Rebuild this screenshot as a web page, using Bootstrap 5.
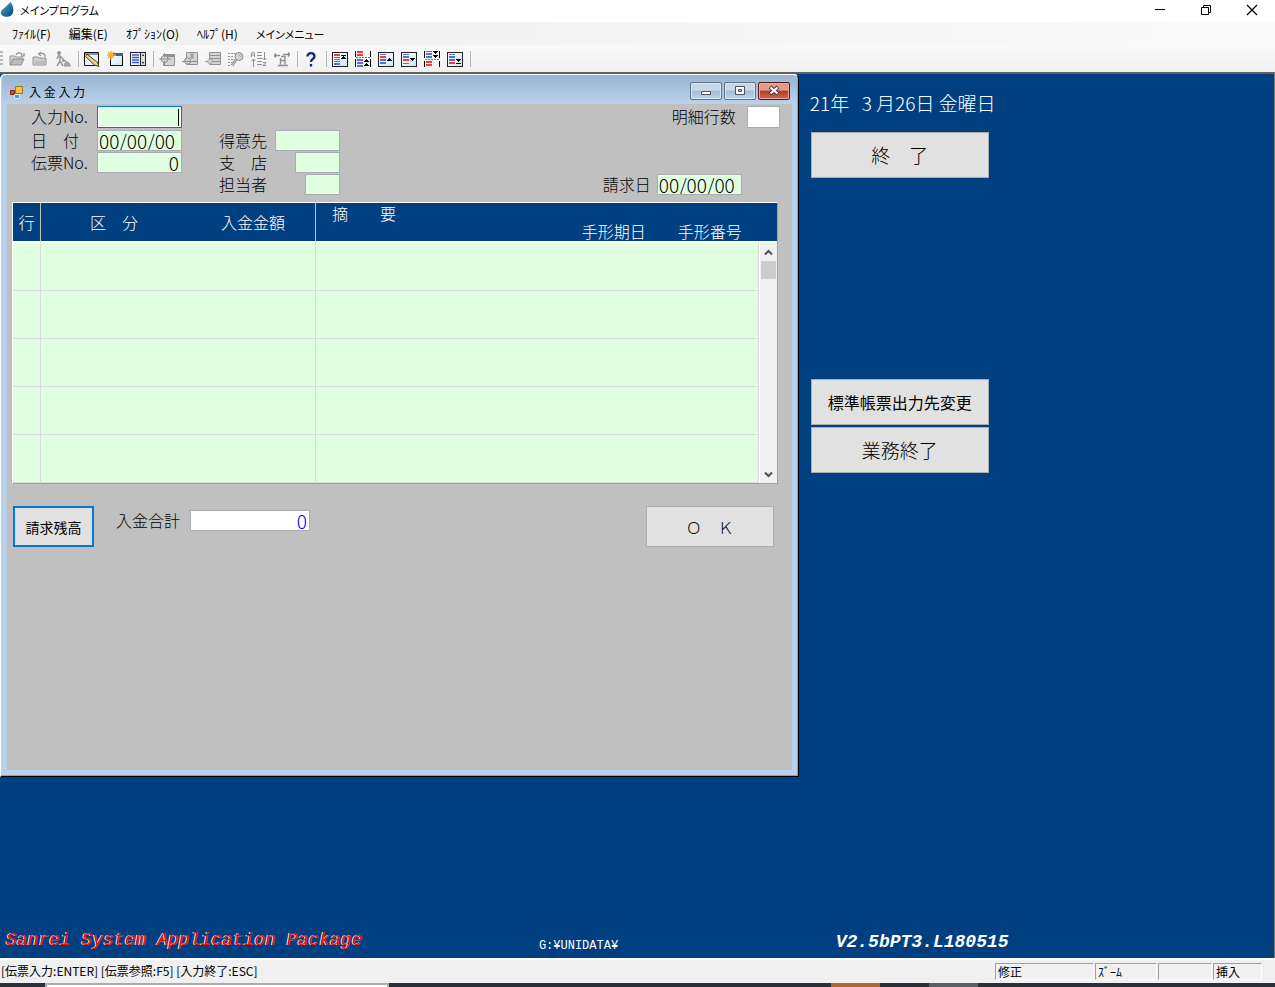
<!DOCTYPE html>
<html lang="ja">
<head>
<meta charset="utf-8">
<meta name="viewport" content="width=device-width, initial-scale=1">
<title>メインプログラム</title>
<link href="https://cdn.jsdelivr.net/npm/bootstrap@5.3.0/dist/css/bootstrap.min.css" rel="stylesheet">
<style>
body{font:12px/16px "Noto Sans CJK JP",sans-serif;color:#000;background:#f0f0f0;overflow:hidden}
.prop{font-feature-settings:"palt"}
button{border-radius:0;color:#000}
.titlebar{height:22px;background:#fff}
.titlebar h1{font-size:11px;line-height:20px;padding-left:4px;font-weight:400}
.caption-btn{width:46px;height:20px;border:0;background:none;padding:0;line-height:0}
.menubar{height:23px;background:linear-gradient(90deg,#f0f0f0,#fafafa);gap:18px;padding:4px 12px 0}
.menubar a{color:#000;text-decoration:none;line-height:16px}
.menubar a:last-child{font-size:11px}
.toolbar{height:27px;background:linear-gradient(#fafafa,#f0f0f0)}
.tool{width:23px;height:22px;border:0;background:none;padding:0;line-height:0}
.grip{width:3px;height:15px;margin-right:2px;background:repeating-linear-gradient(#b8b8b8 0 2px,transparent 2px 4px)}
.sep{width:1px;height:16px;margin:0 1px 0 4px;background:#b4b4b4;flex:none}
.canvas{background:#004080;border-top:2px solid #606060;border-right:1px solid #777}
.child{width:62.7%;min-height:703px;background:#b9d1ea;border:1px solid #fff;border-right-color:#000;border-bottom-color:#000;box-shadow:inset -1px -1px #35cbe8;border-radius:5px 5px 0 0;padding:0 6px 6px;display:flex;flex-direction:column}
.child-title{height:29px;margin:0 -5px;padding:7px 7px 0 7px;background:linear-gradient(#99b4d1,#b9d1ea);border-radius:5px 5px 0 0}
.child-title h2{font-size:12px;line-height:18px;margin:1px 0 0}
.wbtn{width:32px;height:18px;padding:0;border:1px solid #5f7288;border-radius:2px;background:linear-gradient(#c6d7e9 0 45%,#a5bdd8 50%,#bcd2e8);box-shadow:inset 0 0 0 1px #dbe7f3;line-height:0}
.wbtn.shut{border-color:#571a1c;background:linear-gradient(#e39a8e 0 45%,#b93a26 50%,#d0694f);box-shadow:inset 0 0 0 1px #e9aca2}
.client{background:#c0c0c0;padding:2px 12px 0 5px;font-size:16px;font-weight:300}
.fields{display:grid;grid-template-rows:24px 22px 22px 22px}
.fields>div{display:flex;height:21px}
.fields label,.total label{line-height:21px;white-space:pre}
.box{border:1px solid #a8adb3;border-radius:0;background:#e0ffe0;height:21px;padding:0 2px 0 1px;font:300 19px/19px "Noto Sans CJK JP",sans-serif;color:#000;outline:0}
.box.active{border-color:#0078d7;height:22px;background:linear-gradient(#000,#000) right 2px center/1px 17px no-repeat #e0ffe0;box-shadow:inset 0 0 0 1px #fff}
.w-code{width:85px}
.grid-frame{border:1px solid #fff;border-right-color:#a0a0a0;border-bottom-color:#a0a0a0;margin:6px 2px 0 0}
.grid-frame table{width:100%;table-layout:fixed;border-collapse:separate;border-spacing:0}
.grid-frame th{background:#004080;color:#fff;font-weight:300;line-height:18px;height:40px;padding:0;border-bottom:2px solid #fff;border-right:1px solid #c0c0c0;white-space:pre}
.grid-frame th:last-child{border-right:0}
.grid-frame td{background:#e0ffe0;height:48px;padding:0;border-right:1px solid #dcdcdc;border-bottom:1px solid #dcdcdc}
.grid-frame td.bar{background:#f0f0f0;border:0;border-left:1px solid #fff;vertical-align:top}
.vbar{height:240px;display:flex;flex-direction:column;align-items:center}
.vbar button{border:0;background:none;padding:0;height:18px;width:16px;line-height:0}
.vbar i{width:15px;height:18px;background:#cdcdcd}
.push{background:#e1e1e1;border:1px solid #adadad;padding:0;font-weight:300;white-space:pre}
.side{padding-left:12px;width:191px;color:#fff}
.side .push{width:178px;height:46px;display:block;color:#000}
.date{font-size:19px;line-height:28px;font-weight:300;white-space:pre;margin:15px 0 15px -1px}
.product{font:italic 18px/24px "Liberation Mono",monospace;color:#f00;text-shadow:-1px 0 #fff;width:42.3%;padding-left:6px;white-space:nowrap}
.folder{font:12px/16px "Liberation Mono",monospace;color:#fff;width:23.3%}
.version{font:italic bold 18px/24px "Liberation Mono",monospace;color:#fff}
.status{height:25px;background:#f0f0f0;border-top:2px solid #fff;padding:3px 12px 0 1px}
.pane{height:17px;border:1px solid #a0a0a0;border-right-color:#fff;border-bottom-color:#fff;margin-right:1px;padding-left:2px;line-height:16px}
.task{height:4px;background:#2b303d}
.task div{height:4px}
</style>
</head>
<body class="d-flex flex-column vh-100">
<svg width="0" height="0" class="position-absolute" aria-hidden="true">
<defs>
<linearGradient id="lt" x2="1" y2="1"><stop offset="0" stop-color="#fff"/><stop offset="1" stop-color="#cfe4f8"/></linearGradient>
<linearGradient id="drop" x2="1" y2="1"><stop offset="0" stop-color="#4aa6cf"/><stop offset="1" stop-color="#06457a"/></linearGradient>
<g id="frame"><path d="M0 1h16v15H0z" fill="#222"/><path d="M1 2h14v13H1z" fill="url(#lt)"/></g>
<g id="upa"><path d="M0 3h5L2.500 0z" fill="#000"/></g>
<g id="dna"><path d="M0 0h5L2.500 3z" fill="#000"/></g>
<g id="folder"><path d="M1 14V5h5l1 1h6v2" fill="#d4d4d4" stroke="#999"/><path d="M1 14l3-6h11l-3 6z" fill="#bdbdbd" stroke="#8c8c8c"/></g>
</defs>
</svg>

<header class="titlebar d-flex align-items-start flex-shrink-0">
<svg width="16" height="20" viewBox="0 0 16 20" aria-hidden="true"><path d="M10.500 2C13 5 14 9 13 12.500 12 16.500 8 17.500 4.500 16.500.5 15.500-.5 12 2.500 9.500 5.500 7 8 5 10.500 2z" fill="url(#drop)"/></svg>
<h1 class="prop m-0 flex-grow-1">メインプログラム</h1>
<button class="caption-btn" aria-label="最小化"><svg width="12" height="12"><path d="M1 5.500h10" stroke="#000"/></svg></button>
<button class="caption-btn" aria-label="元に戻す"><svg width="12" height="12" fill="none" stroke="#000"><path d="M1.500 3.500h7v7h-7zM3.500 3V1.500h7v7H9"/></svg></button>
<button class="caption-btn" aria-label="閉じる"><svg width="12" height="12"><path d="M1 1l10 10M11 1L1 11" stroke="#000" stroke-width="1.200"/></svg></button>
</header>

<nav class="menubar prop d-flex flex-shrink-0">
<a href="#">ﾌｧｲﾙ(F)</a><a href="#">編集(E)</a><a href="#">ｵﾌﾟｼｮﾝ(O)</a><a href="#">ﾍﾙﾌﾟ(H)</a><a href="#">メインメニュー</a>
</nav>

<div class="toolbar d-flex align-items-center flex-shrink-0" role="toolbar">
<span class="grip"></span>
<button class="tool" aria-label="開く"><svg width="16" height="16"><use href="#folder"/><path d="M7 4c1-3 5-3 6 0m2-2v3h-3" fill="none" stroke="#999" stroke-width="1.300"/></svg></button>
<button class="tool" aria-label="戻す"><svg width="16" height="16"><path d="M1 14V6h5l1 1h7v7z" fill="#ccc" stroke="#929292"/><path d="M2 14l2-4h11l-2 4z" fill="#bbb"/><path d="M13 6c1-4-4-4-6-3m2-2L6.500 3 9 5" fill="none" stroke="#999" stroke-width="1.300"/></svg></button>
<button class="tool" aria-label="実行"><svg width="16" height="16" fill="none" stroke="#999"><circle cx="4" cy="2" r="1.500" fill="#999"/><path d="M4 4l4 4v3M5 6v4L2 15M5 10l3 5M2 8l2-4 7 7" stroke-width="1.500"/><path d="M9 15c1-5 4-6 6.500 0z" fill="#aaa"/></svg></button>
<span class="sep"></span>
<button class="tool" aria-label="編集"><svg width="16" height="16"><path d="M.5 1.500h14v13H.5z" fill="#e9f1fb" stroke="#111"/><path d="M1 2h13v2H1z" fill="#7995cc"/><path d="M3 3l10.500 8.500 1.500 4-4.500-1.500L1.500 5.500z" fill="#efd873" stroke="#4d4015"/></svg></button>
<button class="tool" aria-label="新規ウィンドウ"><svg width="16" height="16"><path d="M3 2h13v13H3z" fill="#111"/><path d="M4 4h11v10H4z" fill="url(#lt)"/><path d="M3 2h13v3H3z" fill="#3f5cad"/><path d="M4 0v9M0 4h9M1 1l6 6M7 1L1 7" stroke="#f7ad20" stroke-width="1.300"/></svg></button>
<button class="tool" aria-label="一覧"><svg width="16" height="16"><path d="M0 1h16v14H0z" fill="#222"/><path d="M1 2h9v12H1z" fill="#eef4ff"/><path d="M2 4h7M2 6.500h7M2 9h7M2 11.500h7" stroke="#4060c0" stroke-width="1.600"/><path d="M11 2h4v12h-4z" fill="#ddd"/><path d="M12 5l1-2 1 2zM12 11l1 2 1-2z" fill="#000"/></svg></button>
<span class="sep"></span>
<button class="tool" aria-label="追加" disabled><svg width="16" height="16" stroke="#909090" fill="#d4d4d4"><path d="M4.500 3.500h11v11h-11z"/><path d="M5 5h10" stroke-width="2"/><circle cx="5.500" cy="8" r="3.500"/><path d="M0 8h12M5.500 2v4M5.500 10v4" /></svg></button>
<button class="tool" aria-label="変更" disabled><svg width="16" height="16" stroke="#909090" fill="#d4d4d4"><path d="M4.500 1.500h11v12h-11z"/><circle cx="5.500" cy="10" r="3"/><path d="M0 10.500h15M8 3l4 4M12 3L8 7M10 2v6"/></svg></button>
<button class="tool" aria-label="挿入" disabled><svg width="16" height="16" stroke="#909090" fill="#d4d4d4"><path d="M4.500 1.500h11v12h-11z"/><path d="M5 4.500h10M5 7.500h10M0 10.500h15"/><path d="M5 7.500l3 3-3 3-3-3z"/></svg></button>
<button class="tool" aria-label="検索" disabled><svg width="16" height="16" stroke="#909090" fill="none"><path d="M0 2.500h9M0 5.500h6M0 8.500h6M0 11.500h4M0 14.500h3" stroke-dasharray="2 1"/><circle cx="11" cy="5.500" r="4" fill="#d4d4d4"/><path d="M8 8.500l-4 6" stroke-width="3"/><path d="M8 8.500l-4 6" stroke="#d4d4d4"/><path d="M11 4l2 1.500"/></svg></button>
<button class="tool" aria-label="並べ替え" disabled><svg width="16" height="16" stroke="#909090" fill="none"><path d="M.5 6V2l2-1 1 1v4M1 4h3M2.500 8v8M.5 10l2-2 2 2M6 1.500h5M6 4.500h5M6 7.500h5M6 10.500h5M6 13.500h5M13.500 1v8M11.500 7l2 2 2-2M12 11.500h3l-3 3h3"/></svg></button>
<button class="tool" aria-label="移動" disabled><svg width="16" height="16" stroke="#909090" fill="none"><path d="M0 4.500h6M2 2.500L0 4.500l2 2M7 5.500h4v8M6.500 7v6.500M7 9.500h4M9 3.500h7M14 1.500l2 2-2 2M4 14.500h10" stroke-width="1.400"/></svg></button>
<span class="sep"></span>
<button class="tool" aria-label="ヘルプ"><svg width="16" height="16"><path d="M4.500 5.500c0-4.500 7-4.500 7 0 0 2.500-3.500 2-3.500 5.500M8 13v2.500" fill="none" stroke="#1c237b" stroke-width="2.300"/></svg></button>
<span class="sep"></span>
<button class="tool" aria-label="先頭"><svg width="16" height="16" shape-rendering="crispEdges"><use href="#frame"/><path d="M2 3h6v2H2zM2 6h6v1H2z" fill="#ee3e3e"/><path d="M2 8h6v1H2zM2 10h6v1H2zM2 12h6v2H2z" fill="#5d70c8"/><path d="M9 4h5v1H9z"/><use href="#upa" x="9" y="5"/></svg></button>
<button class="tool" aria-label="前ページ"><svg width="16" height="16" shape-rendering="crispEdges"><path d="M0 0h1v6H0zM15 0h1v6h-1zM0 8h1v8H0zM15 8h1v8h-1z"/><path d="M2 0h6v2H2zM2 3h6v2H2z" fill="#ee3e3e"/><path d="M1 6.500h14" stroke="#777" stroke-dasharray="2 1"/><path d="M2 8h6v2H2zM2 11h6v2H2zM2 14h6v2H2z" fill="#5d70c8"/><use href="#upa" x="9" y="8"/><use href="#upa" x="9" y="12"/></svg></button>
<button class="tool" aria-label="前行"><svg width="16" height="16" shape-rendering="crispEdges"><use href="#frame"/><path d="M2 3h6v1H2zM2 8h6v2H2zM2 11h6v2H2z" fill="#5d70c8"/><path d="M2 5h6v2H2z" fill="#ee3e3e"/><use href="#upa" x="9" y="7"/></svg></button>
<button class="tool" aria-label="次行"><svg width="16" height="16" shape-rendering="crispEdges"><use href="#frame"/><path d="M2 3h6v1H2zM2 5h6v2H2zM2 12h6v1H2z" fill="#5d70c8"/><path d="M2 8h6v2H2z" fill="#ee3e3e"/><use href="#dna" x="9" y="7"/></svg></button>
<button class="tool" aria-label="次ページ"><svg width="16" height="16" shape-rendering="crispEdges"><path d="M0 0h1v7H0zM15 0h1v7h-1zM0 10h1v6H0zM15 10h1v6h-1z"/><path d="M2 0h6v1H2zM2 2h6v2H2zM2 5h6v2H2z" fill="#5d70c8"/><path d="M1 8.500h14" stroke="#777" stroke-dasharray="2 1"/><path d="M2 10h6v2H2zM2 13h6v2H2z" fill="#ee3e3e"/><use href="#dna" x="9" y="0"/><use href="#dna" x="9" y="4"/></svg></button>
<button class="tool" aria-label="末尾"><svg width="16" height="16" shape-rendering="crispEdges"><use href="#frame"/><path d="M2 3h6v1H2zM2 5h6v2H2zM2 8h6v2H2z" fill="#5d70c8"/><path d="M2 11h6v2H2z" fill="#ee3e3e"/><use href="#dna" x="9" y="8"/><path d="M9 12h5v1H9z"/></svg></button>
<span class="sep"></span>
</div>

<main class="canvas flex-grow-1 d-flex flex-column">
<div class="d-flex align-items-start">
<section class="child flex-shrink-0">
<div class="child-title d-flex align-items-start">
<svg width="16" height="16" class="mt-1 me-1 flex-shrink-0" aria-hidden="true"><path d="M6.500.5h7v7h-7z" fill="#f8c63d" stroke="#a87810"/><path d="M1.500 4.500h4v4h-4z" fill="#d64432" stroke="#8e2018"/><path d="M5.500 8.500h5v4h-5z" fill="#5f96e8" stroke="#d8e6fa"/></svg>
<h2 class="flex-grow-1 fw-normal">入 金 入 力</h2>
<div class="d-flex" style="gap:2px">
<button class="wbtn" aria-label="最小化"><svg width="14" height="12"><path d="M2.500 6.500h9v3h-9z" fill="#fff" stroke="#4b5664"/></svg></button>
<button class="wbtn" aria-label="最大化"><svg width="14" height="12"><path d="M2.500 1.500h9v8h-9z" fill="#fff" stroke="#4b5664"/><path d="M5.500 4.500h3v2h-3z" fill="#a5bdd8" stroke="#4b5664"/></svg></button>
<button class="wbtn shut" aria-label="閉じる"><svg width="14" height="12"><path d="M3 2l8 7M11 2L3 9" stroke="#4b3a3c" stroke-width="4"/><path d="M3.500 2.500l7 6M10.500 2.500l-7 6" stroke="#fff" stroke-width="2.200"/></svg></button>
</div>
</div>
<form class="client flex-grow-1" onsubmit="return false">
<div class="d-flex" style="padding-left:19px">
<div class="fields">
<div><label for="no" style="width:66px">入力No.</label><input id="no" class="box active w-code text-end"></div>
<div><label for="day" style="width:66px">日　付</label><input id="day" class="box w-code" value="00/00/00"></div>
<div><label for="slip" style="width:66px">伝票No.</label><input id="slip" class="box w-code text-end" value="0"></div>
</div>
<div class="fields" style="margin-left:37px;width:121px">
<div></div>
<div class="justify-content-between"><label for="cust">得意先</label><input id="cust" class="box" style="width:65px"></div>
<div class="justify-content-between"><label for="branch">支　店</label><input id="branch" class="box" style="width:45px"></div>
<div class="justify-content-between"><label for="staff">担当者</label><input id="staff" class="box" style="width:35px"></div>
</div>
<div class="fields ms-auto">
<div class="justify-content-end"><label for="lines" style="margin-right:11px">明細行数</label><input id="lines" class="box bg-white" style="width:33px;height:22px"></div>
<div></div><div></div>
<div style="padding-right:38px"><label for="bill" style="margin-right:6px">請求日</label><input id="bill" class="box w-code" value="00/00/00"></div>
</div>
</div>

<div class="grid-frame">
<table>
<colgroup><col style="width:28px"><col style="width:275px"><col><col style="width:18px"></colgroup>
<thead><tr><th class="text-center">行</th><th><div class="d-flex justify-content-between" style="padding:0 30px 0 49px"><span>区　分</span><span>入金金額</span></div></th><th colspan="2"><div style="padding-left:16px">摘　　要</div><div class="d-flex justify-content-end" style="gap:32px;padding-right:35px"><span>手形期日</span><span>手形番号</span></div></th></tr></thead>
<tbody>
<tr><td></td><td></td><td></td><td class="bar" rowspan="5"><div class="vbar"><button type="button" aria-label="上へ"><svg width="9" height="7"><path d="M1 5.500l3.500-3.500L8 5.500" fill="none" stroke="#505050" stroke-width="2"/></svg></button><i></i><button type="button" class="mt-auto" aria-label="下へ"><svg width="9" height="7"><path d="M1 1.500L4.500 5 8 1.500" fill="none" stroke="#505050" stroke-width="2"/></svg></button></div></td></tr>
<tr><td></td><td></td><td></td></tr><tr><td></td><td></td><td></td></tr><tr><td></td><td></td><td></td></tr><tr><td></td><td></td><td></td></tr>
</tbody>
</table>
</div>

<div class="total d-flex align-items-start" style="padding:22px 6px 0 1px">
<button type="button" class="push fw-normal" style="width:81px;height:41px;border:2px solid #0078d7;font-size:14px">請求残高</button>
<label for="sum" style="margin:4px 10px 0 22px">入金合計</label>
<input id="sum" class="box bg-white text-end" style="width:120px;margin-top:4px;color:#00f" value="0">
<button type="submit" class="push ms-auto" style="width:128px;height:41px;font-size:16px">Ｏ　Ｋ</button>
</div>
</form>
</section>

<aside class="side">
<div class="date">21年   3 月26日 金曜日</div>
<button class="push" style="font-size:19px">終　了</button>
<button class="push fw-normal" style="font-size:16px;margin-top:201px">標準帳票出力先変更</button>
<button class="push" style="font-size:19px;margin-top:2px">業務終了</button>
</aside>
</div>
<footer class="mt-auto d-flex align-items-end" style="padding-bottom:4px">
<div class="product" style="padding-bottom:2px">Sanrei System Application Package</div>
<div class="folder">G:¥UNIDATA¥</div>
<div class="version">V2.5bPT3.L180515</div>
</footer>
</main>

<div class="status prop d-flex flex-shrink-0">
<div class="flex-grow-1">[伝票入力:ENTER] [伝票参照:F5] [入力終了:ESC]</div>
<div class="pane" style="width:99px">修正</div><div class="pane" style="width:62px">ｽﾞｰﾑ</div><div class="pane" style="width:54px"></div><div class="pane" style="width:49px">挿入</div>
</div>
<div class="task d-flex flex-shrink-0"><div style="width:3.5%"></div><div style="width:27%;background:#fff;border:2px solid #aaa;border-bottom:0"></div><div style="width:34.7%"></div><div style="width:3.8%;background:#b0662c"></div><div style="width:3.9%"></div><div style="width:3.8%;background:#5b5f66"></div></div>
<script src="https://cdn.jsdelivr.net/npm/bootstrap@5.3.0/dist/js/bootstrap.bundle.min.js"></script>
</body>
</html>
